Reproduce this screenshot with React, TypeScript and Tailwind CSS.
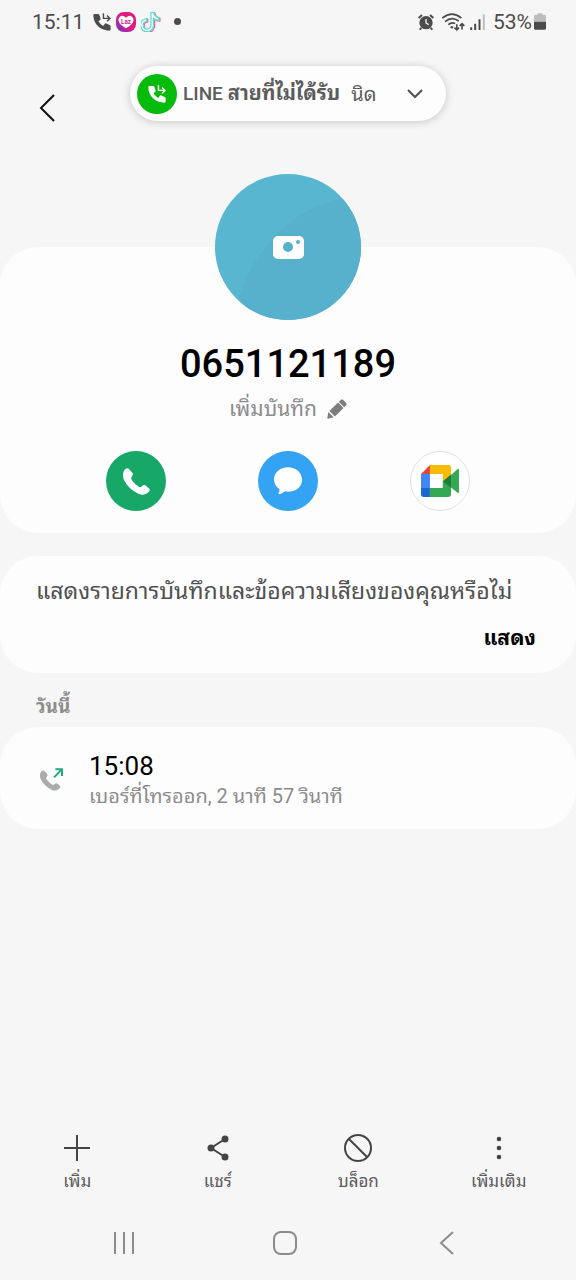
import React from 'react';

const Handset: React.FC<{ className?: string }> = ({ className }) => (
  <svg viewBox="0 0 82 82" fill="currentColor" className={className} aria-hidden="true">
    <path d="M4 6Q12 -2 18 3L29 15Q32 19 27 26Q23 31 27 37Q37 50 48 57Q54 61 58 55Q64 49 69 53L79 62Q84 67 78 73Q66 85 48 79Q14 62 2 34Q-3 18 4 6Z" />
  </svg>
);

const MissedCall: React.FC<{ className?: string }> = ({ className }) => (
  <svg viewBox="0 0 50 50" className={className} aria-hidden="true">
    <path
      fill="currentColor"
      d="M1 6Q1 3 4 3H14Q17 3 18 6L21 15Q22 18 19 20L15 23Q20 31 28 36L32 31Q34 28 37 29L46 33Q49 34 49 37V46Q49 49 46 49Q27 49 14 37Q1 24 1 6Z"
    />
    <path d="M29 1V15H46M39 7L47 15L39 23" fill="none" stroke="currentColor" strokeWidth="4" />
  </svg>
);

const StatusBar: React.FC = () => (
  <header className="flex h-[43px] items-center justify-between pl-8 pr-[30px] text-[21px] leading-6 text-[#4c4c4c]">
    <div className="flex items-center">
      <span>15:11</span>
      <MissedCall className="ml-[9px] h-[18px] w-[18px]" />
      <svg viewBox="0 0 60 60" className="ml-[5px] h-5 w-5" aria-hidden="true">
        <defs>
          <linearGradient id="laz" x1="1" y1="0" x2="0" y2="1">
            <stop offset="0" stopColor="#f0146e" />
            <stop offset="0.55" stopColor="#d6218c" />
            <stop offset="1" stopColor="#6a35c0" />
          </linearGradient>
        </defs>
        <rect width="60" height="60" rx="24" fill="url(#laz)" />
        <path d="M30 17Q40 8 48 14Q56 21 50 32Q46 39 30 49Q14 39 10 32Q4 21 12 14Q20 8 30 17Z" fill="#fff" />
        <text x="30" y="36" fontSize="19" fontWeight="700" textAnchor="middle" fill="#d6218c">
          Laz
        </text>
      </svg>
      <svg viewBox="0 0 60 64" className="ml-[5px] h-[21px] w-5" fill="none" strokeWidth="4" aria-hidden="true">
        <path d="M30 4V43A12 12 0 1 1 17 31V23A20 20 0 1 0 38 43V23Q45 29 54 29V20Q41 18 38 4Z" stroke="#ff5a70" transform="translate(3 2)" />
        <path d="M30 4V43A12 12 0 1 1 17 31V23A20 20 0 1 0 38 43V23Q45 29 54 29V20Q41 18 38 4Z" stroke="#58dfe2" fill="#fff" />
      </svg>
      <span className="ml-[13px] h-[7px] w-[7px] rounded-full bg-[#4c4c4c]" />
    </div>
    <div className="flex items-center">
      <svg viewBox="0 0 48 48" className="h-4 w-4" aria-hidden="true">
        <circle cx="24" cy="26" r="20" fill="#4c4c4c" />
        <path d="M2 12L12 3M46 12L36 3M10 42L5 47M38 42L43 47" stroke="#4c4c4c" strokeWidth="6" />
        <path d="M24 15V27L32 32" fill="none" stroke="#f6f6f6" strokeWidth="4" />
      </svg>
      <svg viewBox="0 0 70 54" className="ml-2 h-[18px] w-[23px]" fill="none" stroke="#4c4c4c" strokeWidth="5" aria-hidden="true">
        <path d="M1 15Q30 -9 59 15M9 26Q30 8 51 24M19 35Q30 26 40 32" />
        <circle cx="30" cy="43" r="4" fill="#4c4c4c" stroke="none" />
        <path d="M45 34V51M38 44L45 51L52 44M61 50V32M54 39L61 32L68 39" strokeWidth="5" />
      </svg>
      <svg viewBox="0 0 44 48" className="ml-[5px] h-4 w-[15px]" aria-hidden="true">
        <path d="M3 40V48M15 29V48M28 16V48" stroke="#4c4c4c" strokeWidth="6" />
        <path d="M41 1V48" stroke="#bdbdbd" strokeWidth="6" />
      </svg>
      <span className="ml-2">53%</span>
      <svg viewBox="0 0 36 50" className="ml-[2px] h-[17px] w-3" aria-hidden="true">
        <path d="M11 0H25V5H31Q36 5 36 10V26H0V10Q0 5 5 5H11Z" fill="#bdbdbd" />
        <path d="M0 26H36V45Q36 50 31 50H5Q0 50 0 45Z" fill="#4c4c4c" />
      </svg>
    </div>
  </header>
);

const CallNotification: React.FC = () => (
  <div className="absolute left-1/2 top-[66px] flex h-[55px] w-[316px] -translate-x-1/2 items-center rounded-full bg-[#fdfdfd] pl-[7px] pr-[22px] text-[20px] text-[#5c5c5c] shadow-[0_1px_8px_rgba(0,0,0,0.2)]">
    <span className="flex h-10 w-10 items-center justify-center rounded-full bg-[#06bb0c] text-white">
      <MissedCall className="h-[18px] w-[18px]" />
    </span>
    <span className="ml-[6px] whitespace-nowrap">
      <span className="text-[19px] font-medium">LINE</span> <b>สายที่ไม่ได้รับ</b>
    </span>
    <span className="ml-[11px] whitespace-nowrap">นิด</span>
    <button type="button" aria-label="ขยาย" className="ml-auto">
      <svg viewBox="0 0 18 10" className="h-[10px] w-[18px]" fill="none" stroke="#505050" strokeWidth="2" aria-hidden="true">
        <path d="M2 1L9 8L16 1" />
      </svg>
    </button>
  </div>
);

const MeetLogo: React.FC = () => (
  <svg viewBox="0 0 115 97" className="h-8 w-[38px]" aria-hidden="true">
    <path d="M27 0V27H0Z" fill="#e94335" />
    <path d="M27 0H82Q91 0 91 9V40L66 50V27H27Z" fill="#fabb05" />
    <path d="M0 27H27V70H0Z" fill="#4285f4" />
    <path d="M0 70H27V97H8Q0 97 0 89Z" fill="#1b66d0" />
    <path d="M27 70H66V48L91 60V88Q91 97 82 97H27Z" fill="#34a853" />
    <path d="M91 30L110 13Q115 10 115 15V82Q115 87 110 83L91 68Z" fill="#34a853" />
    <path d="M66 49L91 29V69Z" fill="#188038" />
  </svg>
);

const ProfileCard: React.FC = () => (
  <section className="flex flex-col items-center rounded-[38px] bg-[#fdfdfd] px-[60px] pb-[22px]">
    <button type="button" aria-label="เพิ่มรูปภาพ" className="-mt-[73px] overflow-hidden rounded-full">
      <svg viewBox="0 0 146 146" className="h-[146px] w-[146px]" aria-hidden="true">
        <rect width="146" height="146" fill="#58b6d0" />
        <path d="M23 128Q30 98 52 71Q80 37 120 26L146 20V146H23Z" fill="#57b0cc" />
        <rect x="58" y="62" width="31" height="23" rx="5" fill="#fff" />
        <circle cx="73" cy="73" r="5" fill="#57b0cc" />
        <circle cx="83" cy="68" r="2" fill="#57b0cc" />
      </svg>
    </button>
    <h1 className="mt-[22px] text-[38px] font-medium leading-[44px] text-black">0651121189</h1>
    <button type="button" className="mt-[9px] flex items-center gap-[10px] text-[21px] leading-7 text-[#8c8c8c]">
      เพิ่มบันทึก
      <svg viewBox="0 0 58 58" className="h-5 w-5" fill="#7d7d7d" aria-hidden="true">
        <path d="M40 3Q43 -1 47 3L55 11Q59 15 55 19L50 24L34 8ZM32 10L48 26L23 51L7 35ZM4 38L19 53L3 57Q1 57 1 55Z" />
      </svg>
    </button>
    <div className="mt-[28px] grid w-full grid-cols-3 justify-items-center">
      <button type="button" aria-label="โทร" className="flex h-[60px] w-[60px] items-center justify-center rounded-full bg-[#17a867] text-white">
        <Handset className="h-[27px] w-[27px]" />
      </button>
      <button type="button" aria-label="ข้อความ" className="flex h-[60px] w-[60px] items-center justify-center rounded-full bg-[#34a3f4]">
        <svg viewBox="0 0 84 84" className="h-7 w-7" fill="#fff" aria-hidden="true">
          <path d="M42 1C65 1 84 16 84 38S65 74 42 74Q37 74 33 73Q25 80 15 82Q12 82 14 78Q18 72 16 66Q0 55 0 38C0 16 19 1 42 1Z" />
        </svg>
      </button>
      <button type="button" aria-label="Google Meet" className="flex h-[60px] w-[60px] items-center justify-center rounded-full border border-[#e0e0e0] bg-white">
        <MeetLogo />
      </button>
    </div>
  </section>
);

const VoiceNoteCard: React.FC = () => (
  <section className="mt-[23px] flex flex-col items-start rounded-[38px] bg-[#fdfdfd] px-9 pb-[21px] pt-5">
    <p className="whitespace-nowrap text-[23px] leading-8 text-[#505050]">แสดงรายการบันทึกและข้อความเสียงของคุณหรือไม่</p>
    <button type="button" className="mt-4 self-end pr-1 text-[21px] font-bold leading-7 text-black">
      แสดง
    </button>
  </section>
);

const CallHistory: React.FC = () => (
  <section>
    <h2 className="px-9 pb-[6px] pt-5 text-[19px] font-bold leading-7 text-[#8c8c8c]">วันนี้</h2>
    <div className="flex items-center rounded-[38px] bg-[#fdfdfd] px-9 pb-[19px] pt-[23px]">
      <span className="ml-1 text-[#a9abac]">
        <svg viewBox="0 0 72 72" className="h-6 w-6" aria-hidden="true">
          <path
            transform="translate(0 7) scale(0.75)"
            fill="currentColor"
            d="M4 6Q12 -2 18 3L29 15Q32 19 27 26Q23 31 27 37Q37 50 48 57Q54 61 58 55Q64 49 69 53L79 62Q84 67 78 73Q66 85 48 79Q14 62 2 34Q-3 18 4 6Z"
          />
          <path d="M42 28L65 5M46 4H66V24" fill="none" stroke="#26a97a" strokeWidth="6" />
        </svg>
      </span>
      <div className="ml-[25px]">
        <p className="text-[26px] leading-8 text-black">15:08</p>
        <p className="whitespace-nowrap text-[20px] leading-7 text-[#8c8c8c]">เบอร์ที่โทรออก, 2 นาที 57 วินาที</p>
      </div>
    </div>
  </section>
);

const actions = [
  {
    label: 'เพิ่ม',
    icon: <path d="M14 1V27M1 14H27" />,
  },
  {
    label: 'แชร์',
    icon: (
      <>
        <path d="M21 5L7 14L21 23" />
        <g fill="#444" stroke="none">
          <circle cx="21" cy="5" r="3.5" />
          <circle cx="7" cy="14" r="3.5" />
          <circle cx="21" cy="23" r="3.5" />
        </g>
      </>
    ),
  },
  {
    label: 'บล็อก',
    icon: <path d="M5 5L23 23M14 1A13 13 0 1 0 14 27A13 13 0 1 0 14 1" />,
  },
  {
    label: 'เพิ่มเติม',
    icon: (
      <g fill="#444" stroke="none">
        <circle cx="14" cy="5" r="2.3" />
        <circle cx="14" cy="14" r="2.3" />
        <circle cx="14" cy="23" r="2.3" />
      </g>
    ),
  },
];

const App: React.FC = () => {
  return (
    <div
      lang="th"
      className="relative flex min-h-screen flex-col bg-[#f6f6f6] font-[Roboto,'Noto_Sans_Thai_Looped','Noto_Sans_Thai','Noto_Sans',sans-serif]"
    >
      <StatusBar />
      <CallNotification />
      <main className="flex-1">
        <div className="flex h-[204px] items-start pl-8 pt-[50px]">
          <button type="button" aria-label="กลับ" className="flex h-[30px] w-[30px] items-center justify-center">
            <svg viewBox="0 0 16 28" className="h-7 w-4" fill="none" stroke="#111" strokeWidth="2" aria-hidden="true">
              <path d="M15 1L2 14L15 27" />
            </svg>
          </button>
        </div>
        <ProfileCard />
        <VoiceNoteCard />
        <CallHistory />
      </main>
      <footer className="grid grid-cols-4 px-[7px]">
        {actions.map((action) => (
          <button key={action.label} type="button" className="flex flex-col items-center text-[17px] leading-7 text-[#5c5c5c]">
            <svg viewBox="0 0 28 28" className="mb-[5px] h-7 w-7" fill="none" stroke="#444" strokeWidth="2" aria-hidden="true">
              {action.icon}
            </svg>
            {action.label}
          </button>
        ))}
      </footer>
      <nav className="mt-9 grid grid-cols-3 justify-items-center pb-[25px] pl-[43px] pr-[49px]">
        <button type="button" aria-label="แอพล่าสุด">
          <svg viewBox="0 0 24 24" className="h-6 w-6" fill="none" stroke="#8c8c8c" strokeWidth="2" aria-hidden="true">
            <path d="M3 1V23M12 1V23M21 1V23" />
          </svg>
        </button>
        <button type="button" aria-label="หน้าแรก">
          <svg viewBox="0 0 24 24" className="h-6 w-6" fill="none" stroke="#8c8c8c" strokeWidth="2" aria-hidden="true">
            <rect x="1" y="1" width="22" height="22" rx="7" />
          </svg>
        </button>
        <button type="button" aria-label="ย้อนกลับ">
          <svg viewBox="0 0 24 24" className="h-6 w-6" fill="none" stroke="#8c8c8c" strokeWidth="2" aria-hidden="true">
            <path d="M19 1L7 12L19 23" />
          </svg>
        </button>
      </nav>
    </div>
  );
};

export default App;
